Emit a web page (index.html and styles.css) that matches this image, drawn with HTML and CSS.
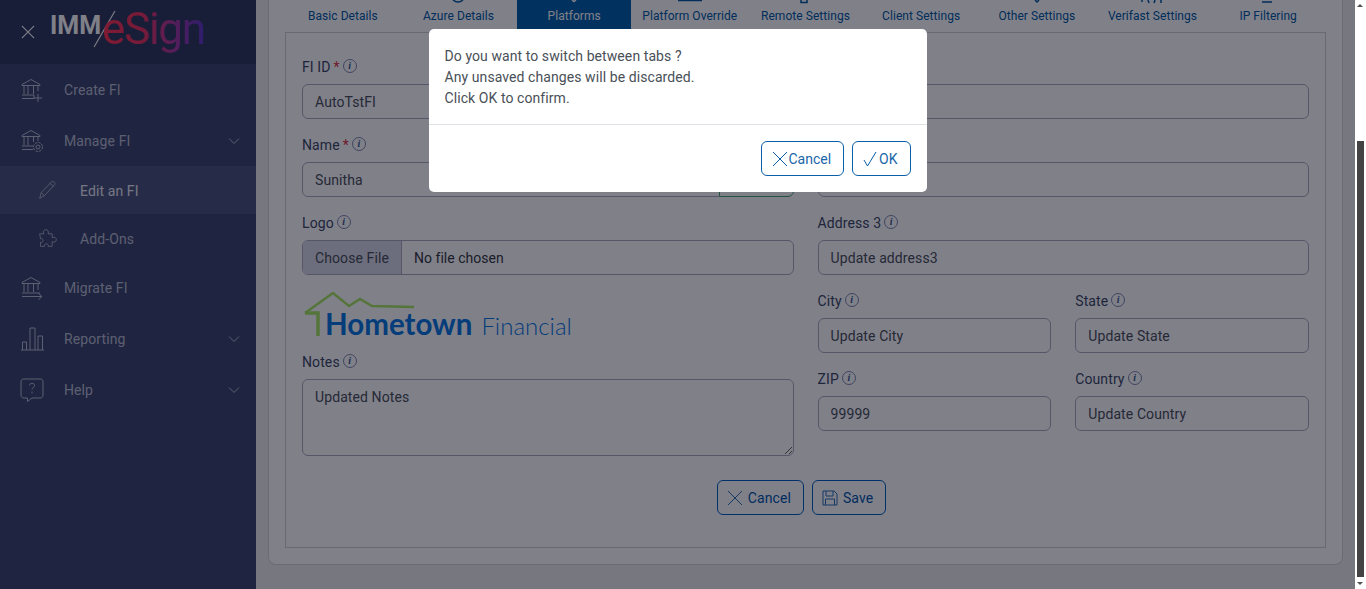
FILE: index.html
```html
<!DOCTYPE html>
<html lang="en">
<head>
    <meta charset="UTF-8">
    <meta name="viewport" content="width=device-width, initial-scale=1.0">
    <title>IMM eSign</title>
    <link rel="stylesheet" href="styles.css">
</head>
<body>
    <div class="shell">
        <aside class="sidebar">
            <div class="brand">
                <svg class="close-icon" viewBox="0 0 16 16"><path d="M1 1l14 14M15 1L1 15"/></svg>
                <span class="brand-imm">IMM</span>
                <svg class="brand-slash" viewBox="0 0 24 40"><path d="M23 1L1 39"/></svg>
                <span class="brand-esign">eSign</span>
            </div>
            <ul class="menu">
                <li class="menu-item">
                    <svg class="menu-icon" viewBox="0 0 24 24"><path d="M2 6.500L11 1.500l9 5v1H2zM4 8v8M8 8v8M13.500 8v8M18 8v5M2 17h12M2 20.500h12v-3.500"/><path d="M14 20h8M18 16v8"/></svg>
                    <span>Create FI</span>
                </li>
                <li class="menu-item has-arrow">
                    <svg class="menu-icon" viewBox="0 0 24 24"><path d="M2 6.500L11 1.500l9 5v1H2zM4 8v8M8 8v8M13.500 8v5M18 8v4M2 17h11M2 20.500h11"/><circle cx="18" cy="18" r="2"/><circle cx="18" cy="18" r="4.500" stroke-dasharray="2.500 1"/></svg>
                    <span>Manage FI</span>
                    <svg class="menu-arrow" viewBox="0 0 12 8"><path d="M1 1.500l5 5 5-5"/></svg>
                </li>
                <li class="menu-item sub active">
                    <svg class="menu-icon" viewBox="0 0 24 24"><path d="M2 22l2-7L16 2.500c1-1 2.500-1 3.500 0s1 2.500 0 3.500L7.500 19zM4 15l3.500 4M14.500 4l4 4"/></svg>
                    <span>Edit an FI</span>
                </li>
                <li class="menu-item sub">
                    <svg class="menu-icon" viewBox="0 0 24 24"><path d="M2 7h5c-1.500-3 .5-5 2.500-5s4 2 2.500 5h5v4.500c3-1.500 5 .5 5 2.500s-2 4-5 2.500V22h-5c1-2-.5-3-2-3s-3 1-2 3H3v-5c2 1 3-.5 3-2s-1-3-3-2z"/></svg>
                    <span>Add-Ons</span>
                </li>
                <li class="menu-item">
                    <svg class="menu-icon" viewBox="0 0 24 24"><path d="M2 6.500L11 1.500l9 5v1H2zM4 8v8M8 8v8M13.500 8v8M18 8v6M2 17h18M2 20.500h20M18.500 17.500l3.500 3-3.500 3"/></svg>
                    <span>Migrate FI</span>
                </li>
                <li class="menu-item has-arrow">
                    <svg class="menu-icon" viewBox="0 0 24 24"><path d="M1 23h23M2.500 23v-8h4v8M10 23V1h5v22M18 23V9h4.500v14"/></svg>
                    <span>Reporting</span>
                    <svg class="menu-arrow" viewBox="0 0 12 8"><path d="M1 1.500l5 5 5-5"/></svg>
                </li>
                <li class="menu-item has-arrow">
                    <svg class="menu-icon" viewBox="0 0 24 24"><path d="M4 1h16c2 0 3 1 3 3v13c0 2-1 3-3 3h-8l-4.500 3.500V20H4c-2 0-3-1-3-3V4c0-2 1-3 3-3z"/><path d="M9.500 7.500c0-3 5-3 5 0 0 2-2.500 2-2.500 4M12 13.500v2"/></svg>
                    <span>Help</span>
                    <svg class="menu-arrow" viewBox="0 0 12 8"><path d="M1 1.500l5 5 5-5"/></svg>
                </li>
            </ul>
        </aside>

        <main class="content">
            <div class="card">
                <div class="tabs">
                    <div class="tab"><span class="tab-peek"></span>Basic Details</div>
                    <div class="tab"><svg class="tab-peek" viewBox="0 0 24 24"><path d="M7 15q5 4 10 0"/></svg>Azure Details</div>
                    <div class="tab active"><svg class="tab-peek" viewBox="0 0 24 24"><path d="M10 15l2 1.500 2-1.500"/></svg>Platforms</div>
                    <div class="tab"><svg class="tab-peek" viewBox="0 0 24 24"><path d="M0 15.500h24"/></svg>Platform Override</div>
                    <div class="tab"><svg class="tab-peek" viewBox="0 0 24 24"><path d="M8 15v2.500h6V15"/></svg>Remote Settings</div>
                    <div class="tab"><span class="tab-peek"></span>Client Settings</div>
                    <div class="tab"><svg class="tab-peek" viewBox="0 0 24 24"><path d="M10 15l2 2 2-2"/></svg>Other Settings</div>
                    <div class="tab"><svg class="tab-peek" viewBox="0 0 24 24"><path d="M1 16h2M8 15l1 3M15 15l-1 3M21 15v3"/></svg>Verifast Settings</div>
                    <div class="tab"><svg class="tab-peek" viewBox="0 0 24 24"><path d="M6 17h10"/></svg>IP Filtering</div>
                </div>

                <div class="panel">
                    <div class="form-grid">
                        <div class="form-col">
                            <div class="field">
                                <label class="field-label">FI ID <em>*</em><i class="info">i</i></label>
                                <input class="text-input" type="text" value="AutoTstFI">
                            </div>
                            <div class="field">
                                <label class="field-label">Name <em>*</em><i class="info">i</i></label>
                                <div class="input-group">
                                    <input class="text-input" type="text" value="Sunitha">
                                    <button class="group-btn" type="button">Check</button>
                                </div>
                            </div>
                            <div class="field">
                                <label class="field-label">Logo<i class="info">i</i></label>
                                <div class="file-input">
                                    <span class="file-btn">Choose File</span>
                                    <span class="file-name">No file chosen</span>
                                </div>
                            </div>
                            <div class="logo-preview">
                                <svg class="logo-house" viewBox="0 0 112 46">
                                    <path class="house-roof" d="M1 21L29 1l16 13 11-7 12 7 42 1"/>
                                    <path class="house-wall" d="M1 21h13v23"/>
                                </svg>
                                <span class="logo-main">Hometown</span>
                                <span class="logo-sub">Financial</span>
                            </div>
                            <div class="field">
                                <label class="field-label">Notes<i class="info">i</i></label>
                                <textarea class="text-area">Updated Notes</textarea>
                            </div>
                        </div>

                        <div class="form-col">
                            <div class="field">
                                <label class="field-label">Address 1<i class="info">i</i></label>
                                <input class="text-input" type="text" value="Address1">
                            </div>
                            <div class="field">
                                <label class="field-label">Address 2<i class="info">i</i></label>
                                <input class="text-input" type="text" value="Address2">
                            </div>
                            <div class="field">
                                <label class="field-label">Address 3<i class="info">i</i></label>
                                <input class="text-input" type="text" value="Update address3">
                            </div>
                            <div class="field-pair">
                                <div class="field">
                                    <label class="field-label">City<i class="info">i</i></label>
                                    <input class="text-input" type="text" value="Update City">
                                </div>
                                <div class="field">
                                    <label class="field-label">State<i class="info">i</i></label>
                                    <input class="text-input" type="text" value="Update State">
                                </div>
                            </div>
                            <div class="field-pair">
                                <div class="field">
                                    <label class="field-label">ZIP<i class="info">i</i></label>
                                    <input class="text-input" type="text" value="99999">
                                </div>
                                <div class="field">
                                    <label class="field-label">Country<i class="info">i</i></label>
                                    <input class="text-input" type="text" value="Update Country">
                                </div>
                            </div>
                        </div>
                    </div>

                    <div class="form-actions">
                        <button class="btn" type="button">
                            <svg class="btn-icon" viewBox="0 0 16 16"><path d="M1 1l14 14M15 1L1 15"/></svg>
                            Cancel
                        </button>
                        <button class="btn" type="button">
                            <svg class="btn-icon" viewBox="0 0 16 16"><path d="M1 1h11l3 3v11H1zM4 1v5h7V1M3.500 15V9h9v6"/></svg>
                            Save
                        </button>
                    </div>
                </div>
            </div>
        </main>

        <div class="scrollbar">
            <span class="scroll-up"></span>
            <span class="scroll-thumb"></span>
            <span class="scroll-down"></span>
        </div>
    </div>

    <div class="overlay">
        <div class="modal">
            <div class="modal-body">
                <p>Do you want to switch between tabs ?</p>
                <p>Any unsaved changes will be discarded.</p>
                <p>Click OK to confirm.</p>
            </div>
            <div class="modal-footer">
                <button class="modal-btn" type="button">
                    <svg class="modal-btn-icon" viewBox="0 0 16 16"><path d="M1 1l14 14M15 1L1 15"/></svg>Cancel
                </button>
                <button class="modal-btn" type="button">
                    <svg class="modal-btn-icon" viewBox="0 0 16 16"><path d="M1 9l3.500 6L13 1"/></svg>OK
                </button>
            </div>
        </div>
    </div>
</body>
</html>
```

FILE: styles.css
```css
* {
    box-sizing: border-box;
}
html, body {
    height: 100%;
}
body {
    margin: 0;
    overflow: hidden;
    font-family: Roboto, sans-serif;
    font-size: 14px;
    letter-spacing: 0.1px;
    color: #212529;
    background-color: #fff;
}
.shell {
    display: flex;
    height: 100vh;
}

/* sidebar */
.sidebar {
    width: 256px;
    flex: none;
    background-color: #3c486c;
}
.brand {
    display: flex;
    align-items: center;
    height: 64px;
    padding-left: 21px;
    background-color: #303a5c;
}
.close-icon {
    width: 14px;
    height: 14px;
    margin-right: 15px;
    flex: none;
    fill: none;
    stroke: #fff;
    stroke-width: 1.3;
}
.brand-imm {
    font-size: 25px;
    font-weight: 700;
    letter-spacing: 0;
    color: #fff;
    margin-top: -13px;
}
.brand-slash {
    width: 23px;
    height: 38px;
    margin: -6px -14px 0 -8px;
    flex: none;
    fill: none;
    stroke: #fff;
    stroke-width: 1.2;
}
.brand-esign {
    font-size: 44px;
    letter-spacing: -1.3px;
    line-height: 1;
    padding-bottom: 6px;
    background-image: linear-gradient(90deg, #ff3350 0%, #e8345f 40%, #a93aa0 70%, #5a38c8 100%);
    -webkit-background-clip: text;
    background-clip: text;
    color: transparent;
}
.menu {
    list-style: none;
    margin: 0;
    padding: 0;
}
.menu-item {
    display: flex;
    align-items: center;
    height: 51px;
    padding-left: 20px;
    color: #b8bdd0;
}
.menu-item span {
    flex: 1;
    margin-left: 20px;
}
.menu-icon {
    width: 24px;
    height: 24px;
    flex: none;
    fill: none;
    stroke: #b8bdd0;
    stroke-width: 1;
}
.menu-arrow {
    width: 12px;
    height: 8px;
    margin-right: 16px;
    fill: none;
    stroke: #b8bdd0;
    stroke-width: 1;
}
.menu-item.sub {
    height: 48px;
    padding-left: 38px;
}
.menu-item.sub .menu-icon {
    width: 20px;
    height: 20px;
}
.menu-item.sub span {
    margin-left: 22px;
    margin-top: 2px;
}
.menu-item.active {
    background-color: #4a567c;
    color: #e8eaf2;
}

/* main content */
.content {
    flex: 1;
    min-width: 0;
    padding: 0 12px;
    background-color: #ececec;
}
.card {
    height: 565px;
    padding: 0 16px;
    background-color: #fff;
    border: 1px solid #d4d4dc;
    border-top: 0;
    border-radius: 0 0 8px 8px;
}
.tabs {
    display: grid;
    grid-template-columns: repeat(9, 1fr);
    height: 32px;
}
.tab {
    font-size: 12px;
    line-height: 14px;
    letter-spacing: 0.05px;
    text-align: center;
    color: #005aa0;
}
.tab.active {
    border: 0 solid transparent;
    border-width: 0 1px;
    background-color: #0060aa;
    background-clip: padding-box;
    color: #fff;
}
.tab-peek {
    display: block;
    width: 24px;
    height: 24px;
    margin: -15px auto 0;
    fill: none;
    stroke: #005aa0;
    stroke-width: 1.5;
}
.tab.active .tab-peek {
    stroke: #fff;
}
.panel {
    height: 516px;
    padding: 23px 16px 0;
    border: 1px solid #d0d0d8;
}
.form-grid {
    display: grid;
    grid-template-columns: 1fr 1fr;
    column-gap: 24px;
}
.form-col {
    min-width: 0;
}
.field {
    margin-bottom: 15px;
    min-width: 0;
}
.field-label {
    display: flex;
    align-items: center;
    height: 21px;
    margin-bottom: 7px;
    color: #3b4a63;
}
.field-label em {
    font-style: normal;
    color: #dc3545;
    margin-left: 3px;
}
.info {
    display: inline-flex;
    align-items: center;
    justify-content: center;
    width: 14px;
    height: 14px;
    margin-left: 3px;
    margin-top: -2px;
    border: 1px solid #7d8aa8;
    border-radius: 50%;
    font-family: "Liberation Serif", serif;
    font-size: 10px;
    font-weight: bold;
    line-height: 1;
    color: #3b5a8c;
}
.text-input {
    display: block;
    width: 100%;
    height: 35px;
    padding: 0 12px;
    border: 1px solid #aaaabe;
    border-radius: 6px;
    background-color: #fff;
    font-family: inherit;
    font-size: 14px;
    letter-spacing: 0.1px;
    color: #495057;
    outline: none;
}
.input-group {
    display: flex;
}
.input-group .text-input {
    flex: 1;
    min-width: 0;
    border-radius: 6px 0 0 6px;
}
.group-btn {
    width: 75px;
    height: 35px;
    flex: none;
    margin-left: -1px;
    border: 1px solid #4aa56b;
    border-radius: 0 6px 6px 0;
    background-color: #fff;
    color: #2e8b57;
}
.file-input {
    display: flex;
    align-items: center;
    height: 35px;
    border: 1px solid #aaaabe;
    border-radius: 6px;
    overflow: hidden;
    color: #495057;
}
.file-btn {
    display: flex;
    align-items: center;
    height: 100%;
    padding: 0 12px;
    background-color: #d8dbe6;
    border-right: 1px solid #aaaabe;
}
.file-name {
    margin-left: 12px;
    letter-spacing: 0.02px;
    color: #343a40;
}
.logo-preview {
    position: relative;
    display: flex;
    align-items: baseline;
    height: 61px;
    padding: 16px 0 0 23px;
}
.logo-house {
    position: absolute;
    top: 2px;
    left: 2px;
    width: 112px;
    height: 46px;
    fill: none;
}
.house-roof {
    stroke: #a8e860;
    stroke-width: 2.500;
}
.house-wall {
    stroke: #a8e860;
    stroke-width: 3.500;
}
.logo-main {
    font-family: Lato, sans-serif;
    font-size: 29.5px;
    font-weight: 700;
    letter-spacing: 0;
    line-height: 1.2;
    color: #0878e0;
}
.logo-sub {
    margin-left: 9px;
    font-family: Lato, sans-serif;
    font-size: 24px;
    font-weight: 300;
    letter-spacing: 0;
    color: #0878e0;
}
.text-area {
    display: block;
    width: 100%;
    height: 77px;
    padding: 9px 12px;
    border: 1px solid #aaaabe;
    border-radius: 6px;
    font-family: inherit;
    font-size: 14px;
    letter-spacing: 0.1px;
    color: #495057;
    outline: none;
}
.field-pair {
    display: grid;
    grid-template-columns: 1fr 1fr;
    column-gap: 24px;
}
.form-actions {
    display: flex;
    justify-content: center;
    gap: 8px;
    margin-top: 9px;
    padding-right: 8px;
}
.btn {
    display: flex;
    align-items: center;
    gap: 5px;
    height: 35px;
    padding: 0 12px 0 9px;
    border: 1px solid #0060c0;
    border-radius: 6px;
    background-color: #fff;
    font-family: inherit;
    font-size: 14px;
    letter-spacing: 0.1px;
    color: #0058a8;
}
.btn-icon {
    width: 16px;
    height: 16px;
    fill: none;
    stroke: #2a70b8;
    stroke-width: 1;
}

/* fake window scrollbar, the page behind the dialog is scrolled */
.scrollbar {
    position: relative;
    width: 11px;
    flex: none;
    background-color: #fff;
}
.scroll-up, .scroll-down {
    position: absolute;
    left: 2px;
    width: 0;
    height: 0;
    border-left: 3px solid transparent;
    border-right: 3px solid transparent;
}
.scroll-up {
    top: 4px;
    border-bottom: 3px solid #505050;
}
.scroll-down {
    bottom: 4px;
    border-top: 3px solid #505050;
}
.scroll-thumb {
    position: absolute;
    top: 141px;
    left: 2px;
    width: 7px;
    height: 436px;
    background-color: #434343;
}

/* dialog */
.overlay {
    position: fixed;
    top: 0;
    bottom: 0;
    left: 0;
    right: 11px;
    padding-top: 29px;
    background-color: rgba(2, 2, 20, 0.5);
}
.modal {
    width: 498px;
    margin: 0 auto;
    background-color: #fff;
    border-radius: 5px;
}
.modal-body {
    height: 96px;
    padding: 17px 16px 0;
    border-bottom: 1px solid #dee2e6;
    line-height: 21px;
    letter-spacing: 0.08px;
    color: #495057;
}
.modal-body p {
    margin: 0;
}
.modal-footer {
    display: flex;
    justify-content: flex-end;
    gap: 8px;
    padding: 16px;
}
.modal-btn {
    display: flex;
    align-items: center;
    height: 35px;
    padding: 0 12px 0 10px;
    border: 1px solid #0a5fa8;
    border-radius: 6px;
    background-color: #fff;
    font-family: inherit;
    font-size: 14px;
    color: #1a66a8;
}
.modal-btn-icon {
    width: 16px;
    height: 16px;
    fill: none;
    stroke: #0a5fa8;
    stroke-width: 1;
}
```
